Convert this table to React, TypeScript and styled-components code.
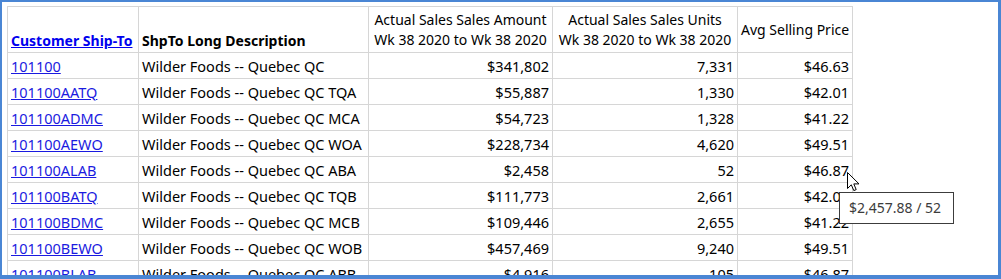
import React from 'react';
import styled, { createGlobalStyle } from 'styled-components';

type Row = {
  shipTo: string;
  description: string;
  amount: string;
  units: string;
  price: string;
};

const rows: Row[] = [
  { shipTo: '101100', description: 'Wilder Foods -- Quebec QC', amount: '$341,802', units: '7,331', price: '$46.63' },
  { shipTo: '101100AATQ', description: 'Wilder Foods -- Quebec QC TQA', amount: '$55,887', units: '1,330', price: '$42.01' },
  { shipTo: '101100ADMC', description: 'Wilder Foods -- Quebec QC MCA', amount: '$54,723', units: '1,328', price: '$41.22' },
  { shipTo: '101100AEWO', description: 'Wilder Foods -- Quebec QC WOA', amount: '$228,734', units: '4,620', price: '$49.51' },
  { shipTo: '101100ALAB', description: 'Wilder Foods -- Quebec QC ABA', amount: '$2,458', units: '52', price: '$46.87' },
  { shipTo: '101100BATQ', description: 'Wilder Foods -- Quebec QC TQB', amount: '$111,773', units: '2,661', price: '$42.01' },
  { shipTo: '101100BDMC', description: 'Wilder Foods -- Quebec QC MCB', amount: '$109,446', units: '2,655', price: '$41.22' },
  { shipTo: '101100BEWO', description: 'Wilder Foods -- Quebec QC WOB', amount: '$457,469', units: '9,240', price: '$49.51' },
  { shipTo: '101100BLAB', description: 'Wilder Foods -- Quebec QC ABB', amount: '$4,916', units: '105', price: '$46.87' },
];

const GlobalStyle = createGlobalStyle`
  html, body {
    margin: 0;
    padding: 0;
    background: #ffffff;
  }
  body {
    font-family: "Noto Sans", "Open Sans", Arial, sans-serif;
  }
`;

const App = () => {
  return (
    <>
      <GlobalStyle />
      <Frame>
        <Report>
          <colgroup>
            <col width={131} />
            <col width={230} />
            <col width={184} />
            <col width={185} />
            <col width={115} />
          </colgroup>
          <thead>
            <tr>
              <HeadCell $align="left" $valign="bottom">
                <HeadLink href="#">Customer Ship-To</HeadLink>
              </HeadCell>
              <HeadCell $align="left" $valign="bottom">ShpTo Long Description</HeadCell>
              <HeadCell $align="center" $valign="middle" $plain>
                Actual Sales Sales Amount<br />Wk 38 2020 to Wk 38 2020
              </HeadCell>
              <HeadCell $align="center" $valign="middle" $plain>
                Actual Sales Sales Units<br />Wk 38 2020 to Wk 38 2020
              </HeadCell>
              <HeadCell $align="center" $valign="middle" $plain>Avg Selling Price</HeadCell>
            </tr>
          </thead>
          <tbody>
            {rows.map(row => (
              <tr key={row.shipTo}>
                <Cell>
                  <RowLink href="#">{row.shipTo}</RowLink>
                </Cell>
                <Cell>{row.description}</Cell>
                <Cell $numeric>{row.amount}</Cell>
                <Cell $numeric>{row.units}</Cell>
                <Cell $numeric>{row.price}</Cell>
              </tr>
            ))}
          </tbody>
        </Report>

        <Pointer width="13" height="20" viewBox="0 0 13 20">
          <path
            d="M0.5 0.5 L0.5 16.5 L4.3 12.8 L6.8 18.6 L9.2 17.6 L6.8 11.9 L12 11.9 Z"
            fill="#ffffff"
            stroke="#000000"
            strokeWidth="1"
            strokeLinejoin="miter"
          />
        </Pointer>
        <Tooltip>$2,457.88 / 52</Tooltip>
      </Frame>
    </>
  );
};

export default App;

const Frame = styled.div`
  position: relative;
  box-sizing: border-box;
  width: 1001px;
  height: 279px;
  overflow: hidden;
  border-style: solid;
  border-color: #4a86d4;
  border-width: 2px 3px 4px 2px;
  padding: 4px 0 0 5px;
  background: #ffffff;
`;

const Report = styled.table`
  border-collapse: collapse;
  table-layout: fixed;
  width: 846px;
  font-size: 14.5px;
  color: #000000;

  td, th {
    border: 1px solid #d6d6d6;
  }
`;

const HeadCell = styled.th<{ $align: string; $valign: string; $plain?: boolean }>`
  height: 42px;
  padding: 2px 3px 1px;
  font-size: 14px;
  line-height: 20px;
  text-align: ${({ $align }) => $align};
  vertical-align: ${({ $valign }) => $valign};
  font-weight: ${({ $plain }) => ($plain ? 400 : 700)};
  white-space: nowrap;
  overflow: hidden;
`;

const HeadLink = styled.a`
  color: #0000ee;
  text-decoration: underline;
`;

const Cell = styled.td<{ $numeric?: boolean }>`
  height: 25px;
  padding: 0 3px;
  line-height: 20px;
  text-align: ${({ $numeric }) => ($numeric ? 'right' : 'left')};
  vertical-align: middle;
  white-space: nowrap;
  overflow: hidden;
`;

const RowLink = styled.a`
  color: #1a1ae0;
  text-decoration: underline;
`;

const Pointer = styled.svg`
  position: absolute;
  left: 845px;
  top: 170px;
`;

const Tooltip = styled.div`
  position: absolute;
  left: 837px;
  top: 190px;
  box-sizing: border-box;
  width: 115px;
  height: 32px;
  padding: 0 9px;
  border: 1px solid #3c3c3c;
  background: #ffffff;
  color: #3c3c3c;
  font-size: 14px;
  line-height: 30px;
  white-space: nowrap;
`;
